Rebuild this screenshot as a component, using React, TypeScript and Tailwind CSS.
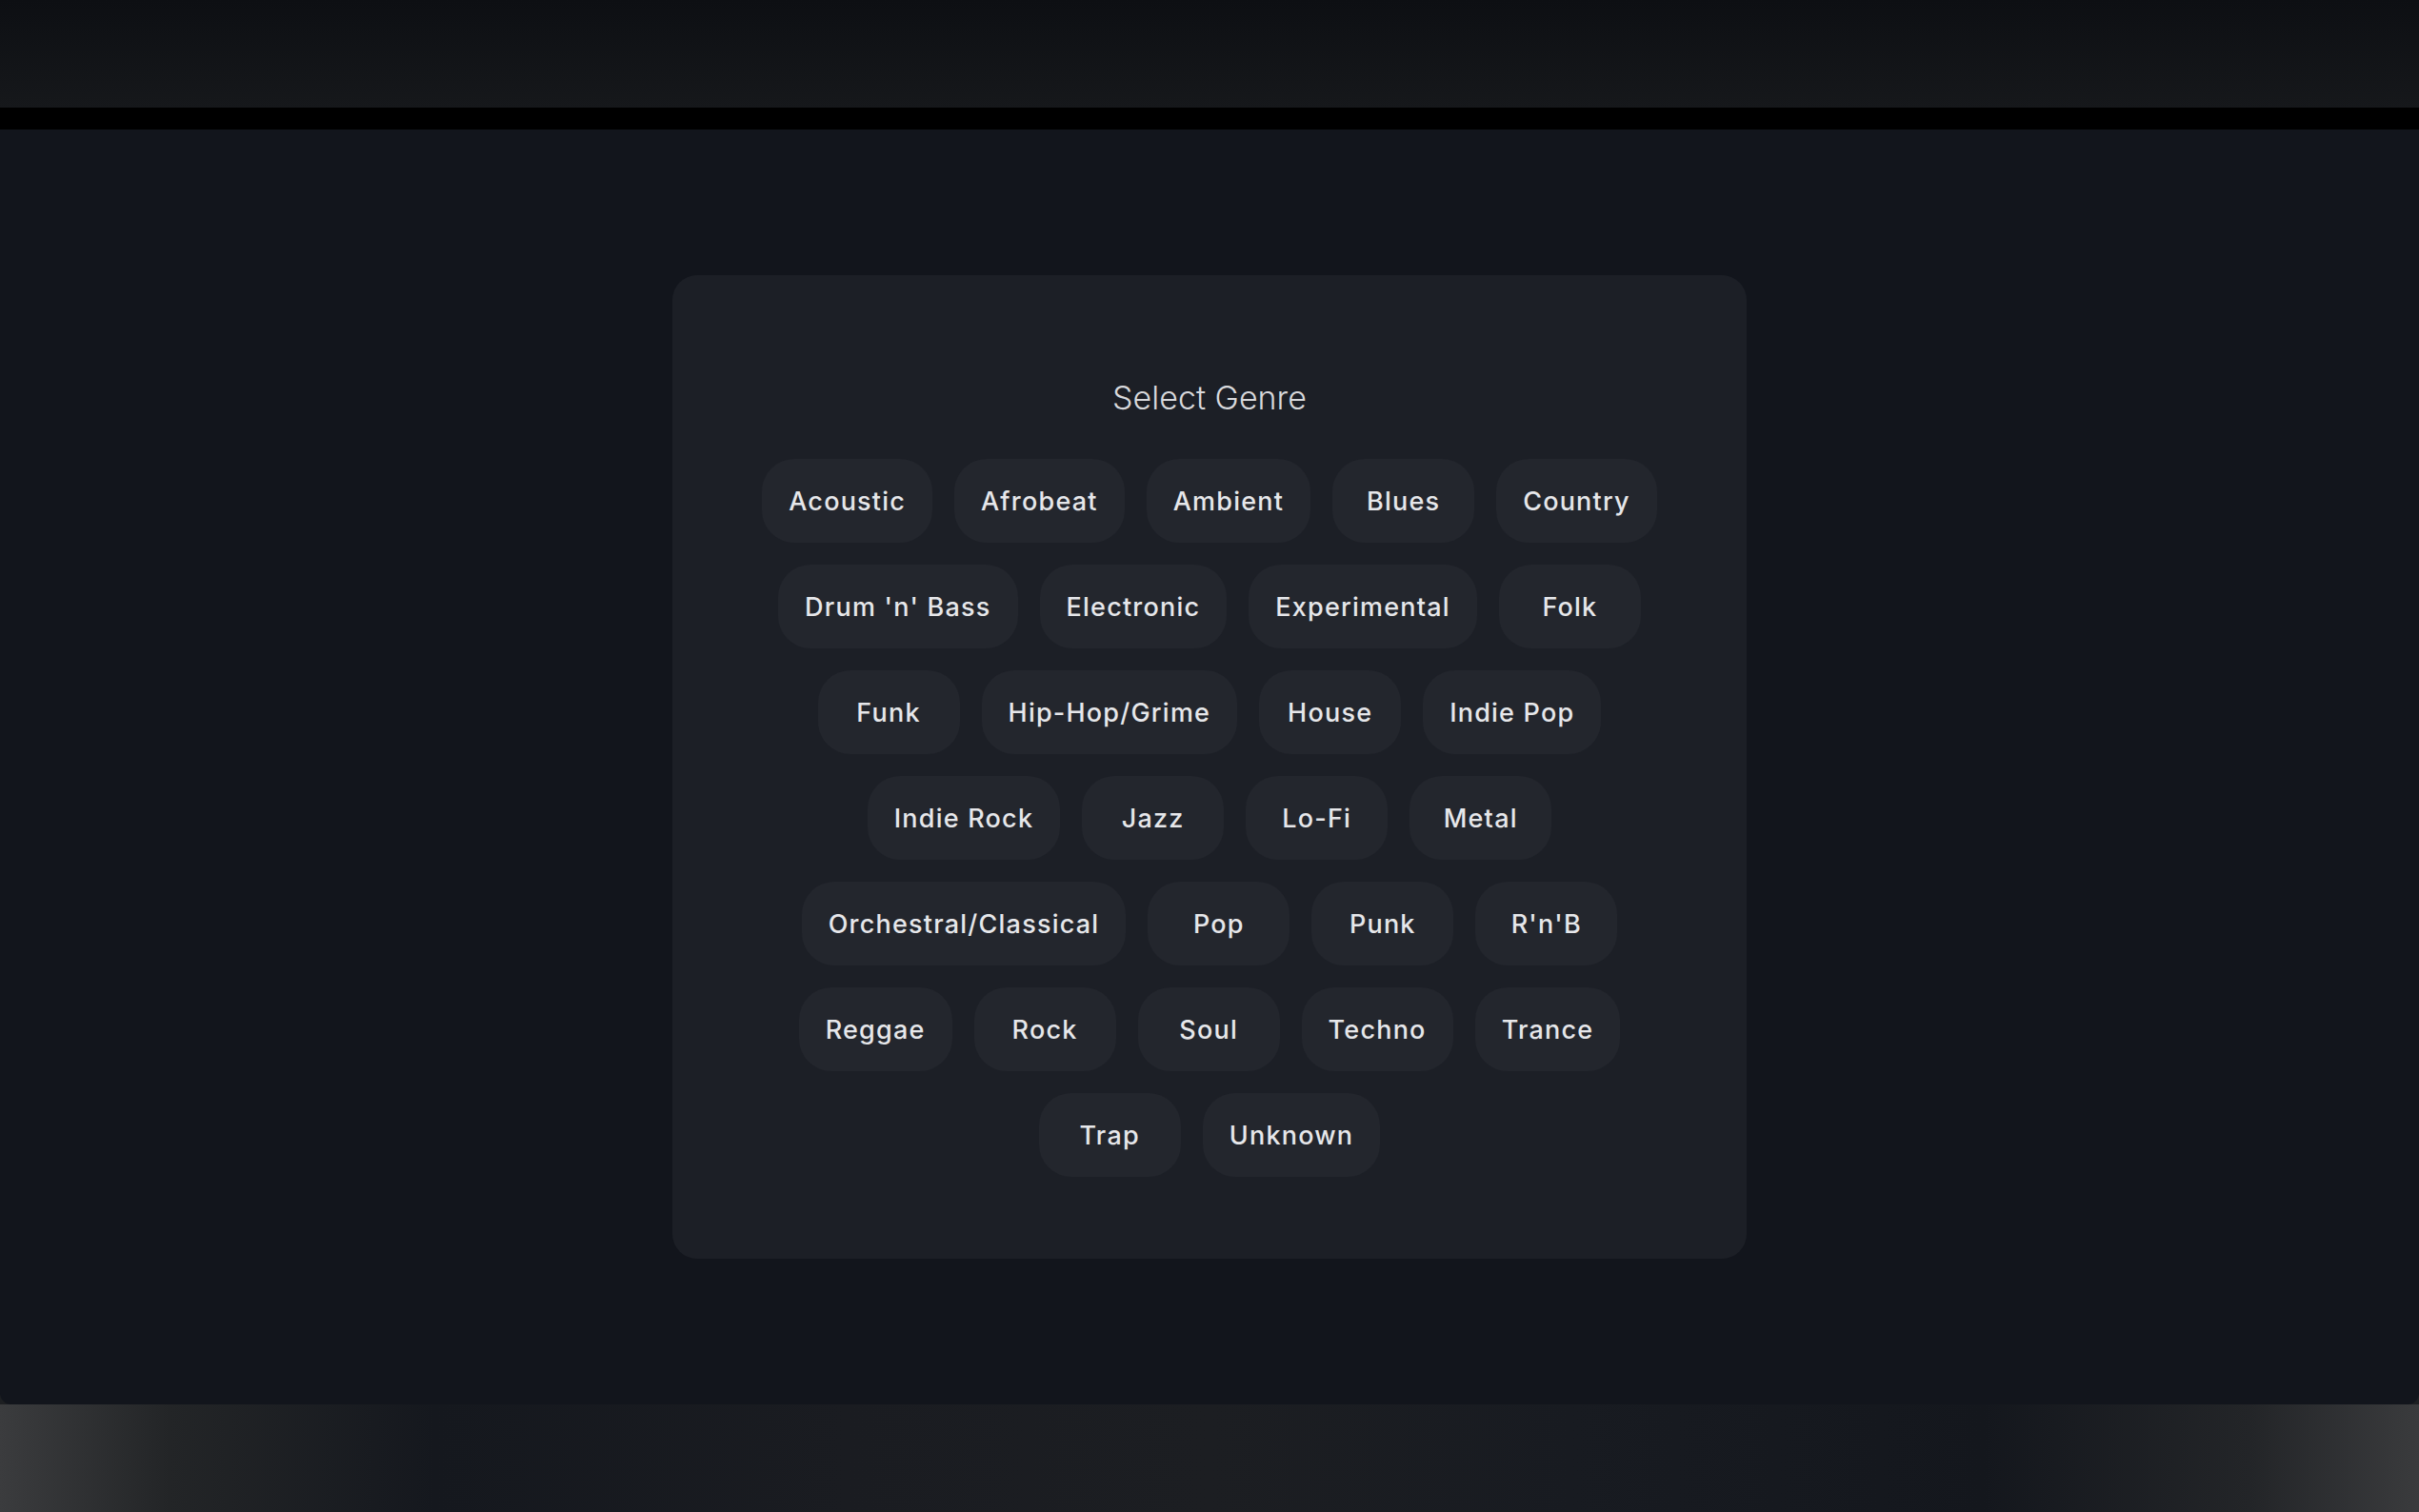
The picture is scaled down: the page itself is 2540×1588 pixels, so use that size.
const GENRE_ROWS: string[][] = [
  ["Acoustic", "Afrobeat", "Ambient", "Blues", "Country"],
  ["Drum 'n' Bass", "Electronic", "Experimental", "Folk"],
  ["Funk", "Hip-Hop/Grime", "House", "Indie Pop"],
  ["Indie Rock", "Jazz", "Lo-Fi", "Metal"],
  ["Orchestral/Classical", "Pop", "Punk", "R'n'B"],
  ["Reggae", "Rock", "Soul", "Techno", "Trance"],
  ["Trap", "Unknown"],
];

function GenreButton({ label }: { label: string }) {
  return (
    <button className="h-[88px] min-w-[149px] px-7 pt-[2px] rounded-[34px] bg-[#23262d] text-[27px] font-medium tracking-[0.045em] text-[#e6e7ea] hover:bg-[#2b2f37] transition-colors">
      {label}
    </button>
  );
}

export default function App() {
  return (
    <div className="w-[2540px] h-[1588px] flex flex-col bg-[#1d1f22] font-['Inter',sans-serif] overflow-hidden">
      <div className="h-[113px] shrink-0 bg-gradient-to-b from-[#0d0f13] to-[#16181b]" />
      <div className="h-[23px] shrink-0 bg-black" />

      <main className="h-[1339px] shrink-0 flex items-center justify-center bg-[#12151c] rounded-b-xl">
        <div className="w-[1128px] rounded-[26px] bg-[#1c1f26] pt-[109px] pb-[86px] flex flex-col items-center">
          <h1 className="h-[40px] leading-[40px] text-[34px] font-light text-[#d8d9dc]">
            Select Genre
          </h1>
          <div className="mt-[44px] flex flex-col items-center gap-[23px]">
            {GENRE_ROWS.map((row, i) => (
              <div key={i} className="flex justify-center gap-[23px]">
                {row.map((g) => (
                  <GenreButton key={g} label={g} />
                ))}
              </div>
            ))}
          </div>
        </div>
      </main>

      <div className="flex-1 bg-[linear-gradient(90deg,#3b3c3e_0%,#232527_7%,#15181e_18%,#1a1c21_35%,#1c1e22_50%,#181b21_65%,#14171d_82%,#232528_93%,#3a3b3d_100%)]" />
    </div>
  );
}
